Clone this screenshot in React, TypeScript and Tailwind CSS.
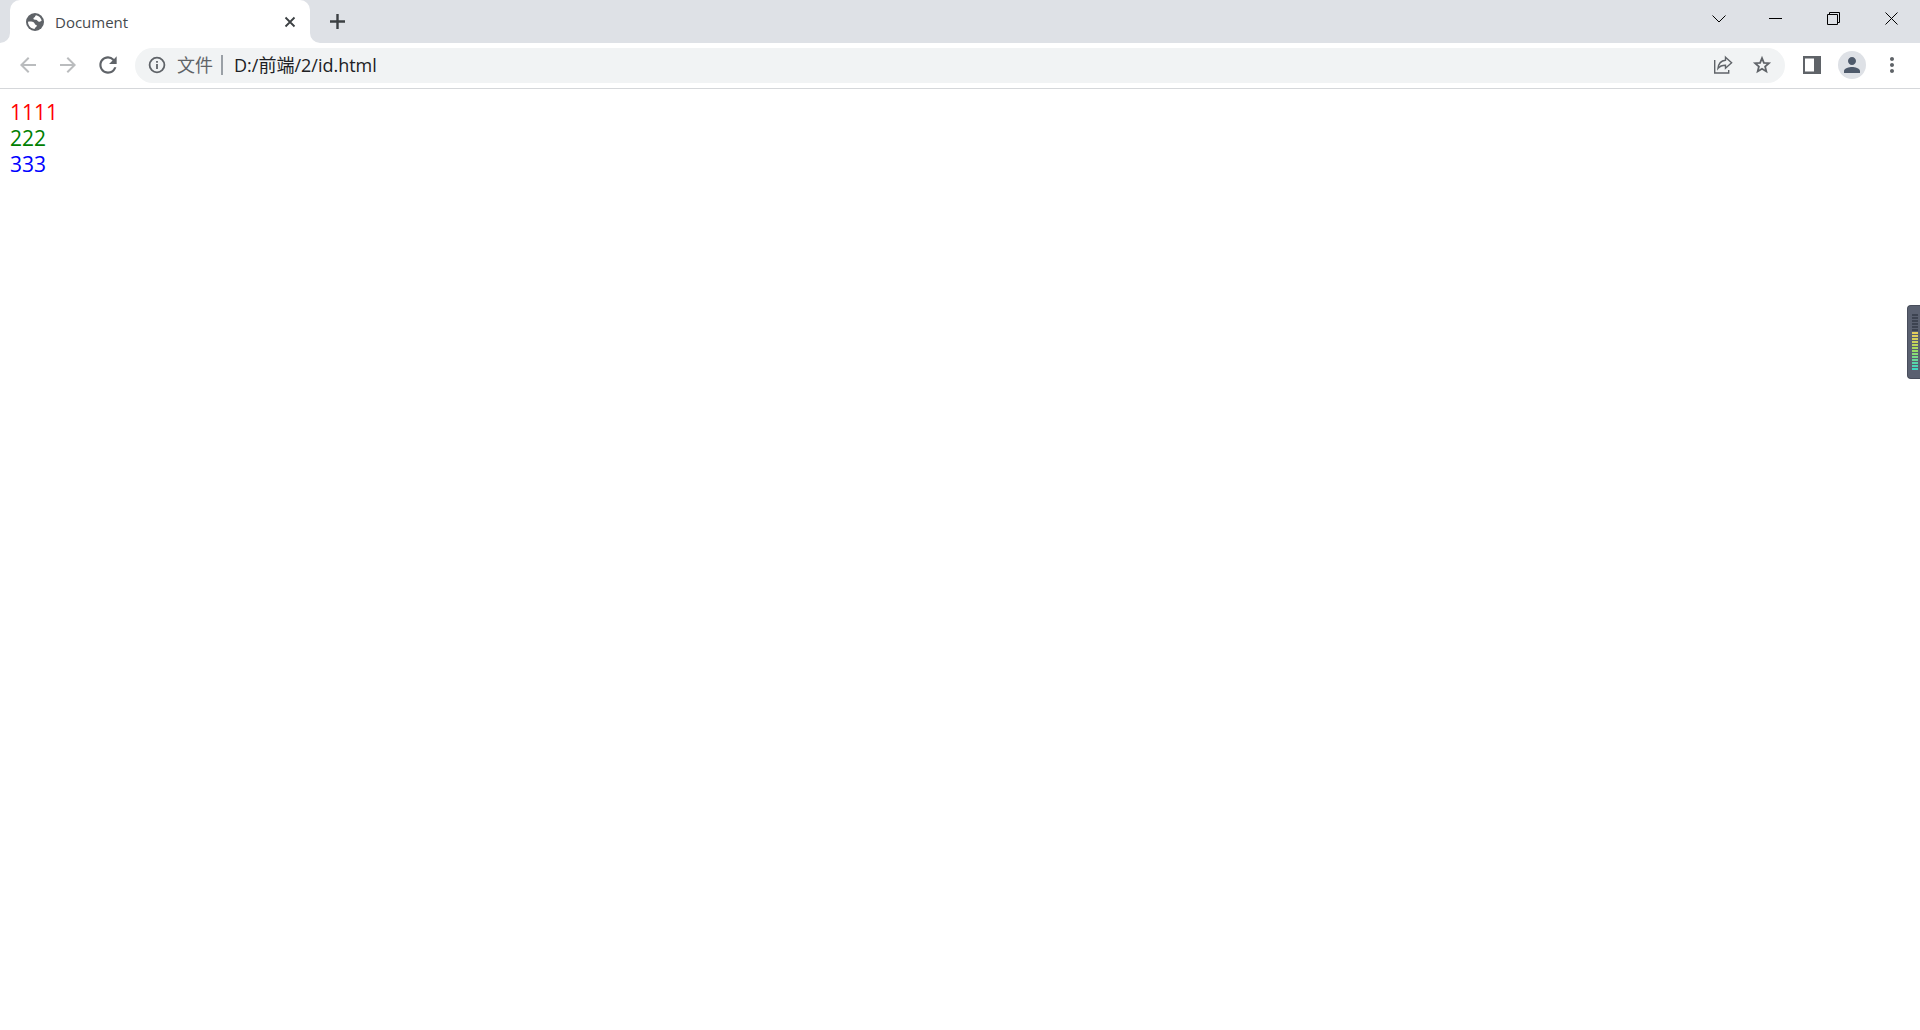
import React from "react";
import {
	MdArrowBack,
	MdArrowForward,
	MdMoreVert,
	MdPerson,
	MdRefresh,
} from "react-icons/md";

const lines = [
	{ id: "one", text: "1111", color: "text-[#ff0000]" },
	{ id: "two", text: "222", color: "text-[#008000]" },
	{ id: "three", text: "333", color: "text-[#0000ff]" },
];

const levels = [
	"bg-[#3d4351]",
	"bg-[#3d4351]",
	"bg-[#3d4351]",
	"bg-[#3d4351]",
	"bg-[#3d4351]",
	"bg-[#3d4351]",
	"bg-[#e3cd5c]",
	"bg-[#e0ce5c]",
	"bg-[#d6d05c]",
	"bg-[#cad35a]",
	"bg-[#bcd75a]",
	"bg-[#a9dc5c]",
	"bg-[#98dd66]",
	"bg-[#88dd75]",
	"bg-[#78dc88]",
	"bg-[#68d99a]",
	"bg-[#58d6a8]",
	"bg-[#4cd6b4]",
	"bg-[#3fd8c0]",
];

function TabStrip() {
	return (
		<header className="flex h-[43px] bg-[#dee1e6]">
			{/* Active tab */}
			<svg className="size-[10px] self-end fill-white" viewBox="0 0 10 10">
				<path d="M10 0v10H0A10 10 0 0 0 10 0z" />
			</svg>
			<div className="flex w-[300px] items-center rounded-t-[10px] bg-white pl-4 pr-3">
				<svg
					className="size-[18px] shrink-0 text-[#5f6368]"
					viewBox="0 0 18 18"
					fill="currentColor"
				>
					<circle cx="9" cy="9" r="9" />
					<path
						fill="#fff"
						d="M10.2 2.3C12.8 2.8 15 4.9 15.7 7.6C14.9 8.6 13.6 9 12.4 8.4C11.4 7.9 11.2 6.9 10 6.8C8.6 6.7 7.4 6.6 7.4 5.5C7.4 4.5 8.6 4.5 9 3.7C9.3 3.1 9.4 2.5 10.2 2.3z"
					/>
					<path
						fill="#fff"
						d="M2 8.7C3.8 8.6 6.6 8.4 7.9 9.4C9 10.3 8.6 11.3 9.7 11.7C10.8 12.1 11.2 12.8 10.5 13.6C9.8 14.4 8.9 14.5 8.9 15.8C5.1 15.9 2 12.8 2 8.7z"
					/>
				</svg>
				<span className="ml-[11px] flex-1 text-[15px] leading-5 text-[#45494d]">
					Document
				</span>
				<button aria-label="Close tab" className="text-[#3c4043]">
					<svg
						className="size-4"
						viewBox="0 0 16 16"
						fill="none"
						stroke="currentColor"
						strokeWidth="1.8"
					>
						<path d="M3.5 3.5l9 9M12.5 3.5l-9 9" />
					</svg>
				</button>
			</div>
			<svg className="size-[10px] self-end fill-white" viewBox="0 0 10 10">
				<path d="M0 0v10h10A10 10 0 0 1 0 0z" />
			</svg>
			<button aria-label="New tab" className="px-2 text-[#3c4043]">
				<svg
					className="size-[19px]"
					viewBox="0 0 19 19"
					fill="none"
					stroke="currentColor"
					strokeWidth="2.4"
				>
					<path d="M9.5 2v15M2 9.5h15" />
				</svg>
			</button>

			{/* Window buttons */}
			<div className="ml-auto flex h-[37px] text-black">
				<button
					aria-label="Search tabs"
					className="flex w-[54px] items-center justify-center"
				>
					<svg
						className="h-2 w-[14px]"
						viewBox="0 0 14 8"
						fill="none"
						stroke="currentColor"
					>
						<path d="M.5.5L7 7L13.5.5" />
					</svg>
				</button>
				<button
					aria-label="Minimize"
					className="flex w-[58px] items-center justify-center"
				>
					<span className="h-px w-[13px] bg-black" />
				</button>
				<button
					aria-label="Restore"
					className="flex w-[58px] items-center justify-center"
				>
					<svg
						className="size-[13px]"
						viewBox="0 0 13 13"
						fill="none"
						stroke="currentColor"
					>
						<path d="M.5 2.5h10v10H.5zM2.5 2.5v-2h10v10h-2" />
					</svg>
				</button>
				<button
					aria-label="Close"
					className="flex w-[58px] items-center justify-center"
				>
					<svg
						className="size-[13px]"
						viewBox="0 0 13 13"
						fill="none"
						stroke="currentColor"
					>
						<path d="M.5.5l12 12M12.5.5l-12 12" />
					</svg>
				</button>
			</div>
		</header>
	);
}

function Toolbar() {
	return (
		<nav className="flex h-[46px] items-center border-b border-[#d5d7da] px-2 text-[#5f6368]">
			<button
				aria-label="Back"
				className="flex w-10 justify-center pb-px text-[#babcbe]"
			>
				<MdArrowBack className="size-6" />
			</button>
			<button
				aria-label="Forward"
				className="flex w-10 justify-center pb-px text-[#babcbe]"
			>
				<MdArrowForward className="size-6" />
			</button>
			<button aria-label="Reload" className="flex w-10 justify-center pb-px">
				<MdRefresh className="size-[26px]" />
			</button>

			{/* Address bar */}
			<div className="mx-[7px] flex h-[35px] flex-1 items-center rounded-full bg-[#f1f3f4] px-3 pb-px">
				<svg
					className="size-5 shrink-0"
					viewBox="0 0 20 20"
					fill="none"
					stroke="currentColor"
					strokeWidth="1.8"
				>
					<circle cx="10" cy="10" r="7.4" />
					<path d="M10 9v5M10 6v1.8" />
				</svg>
				<label
					htmlFor="address"
					className="ml-[10px] shrink-0 text-[18px] leading-6"
				>
					文件
				</label>
				<span className="ml-2 h-5 w-[2px] bg-[#9aa0a6]" />
				<input
					id="address"
					type="text"
					defaultValue="D:/前端/2/id.html"
					className="ml-[11px] min-w-0 flex-1 bg-transparent text-[18px] leading-6 text-[#202124] outline-none"
				/>
				<button aria-label="Share" className="flex w-10 justify-center">
					<svg
						className="size-5"
						viewBox="0 0 20 20"
						fill="none"
						stroke="currentColor"
						strokeWidth="1.4"
					>
						<path d="M1.7 5v13h14v-3" />
						<path d="M12.5 2.2L18.6 7.8L12.5 13.2V10.2C9 10.2 6.8 11 5 13.4C5.4 9 8 5.7 12.5 5.2z" />
					</svg>
				</button>
				<button aria-label="Bookmark" className="ml-2 flex w-[22px] justify-center">
					<svg
						className="size-5"
						viewBox="0 0 20 20"
						fill="none"
						stroke="currentColor"
						strokeWidth="1.8"
					>
						<path d="M10 3.2L11.9 7.8L16.9 8.2L13.1 11.5L14.3 16.4L10 13.8L5.7 16.4L6.9 11.5L3.1 8.2L8.1 7.8z" />
					</svg>
				</button>
			</div>

			<button aria-label="Side panel" className="flex w-10 justify-center pb-px">
				<svg className="size-[18px]" viewBox="0 0 18 18" fill="currentColor">
					<path fillRule="evenodd" d="M0 0h18v18H0zM2 2.5v13h9v-13z" />
				</svg>
			</button>
			<button aria-label="Profile" className="flex w-10 justify-center pb-px">
				<span className="flex size-7 items-center justify-center rounded-full bg-[#dee1e6] text-[#4e5a6b]">
					<MdPerson className="size-6" />
				</span>
			</button>
			<button aria-label="Menu" className="flex w-10 justify-center pb-px">
				<MdMoreVert className="size-6" />
			</button>
		</nav>
	);
}

function LevelMeter() {
	return (
		<aside className="fixed right-0 top-[305px] flex h-[74px] w-[13px] flex-col gap-px rounded-l-[4px] border border-r-0 border-[#484d5b] bg-[#5a6070] pl-1 pt-2">
			{levels.map((level, i) => (
				<span key={i} className={`h-[2px] w-[6px] ${level}`} />
			))}
		</aside>
	);
}

export default function App() {
	return (
		<div className="min-h-screen bg-white font-['Open_Sans','Noto_Sans_CJK_SC',sans-serif]">
			<TabStrip />
			<Toolbar />
			{/* Page */}
			<main className="p-[10px] text-[21px] leading-[26px]">
				{lines.map((line) => (
					<div key={line.id} id={line.id} className={line.color}>
						{line.text}
					</div>
				))}
			</main>
			<LevelMeter />
		</div>
	);
}
